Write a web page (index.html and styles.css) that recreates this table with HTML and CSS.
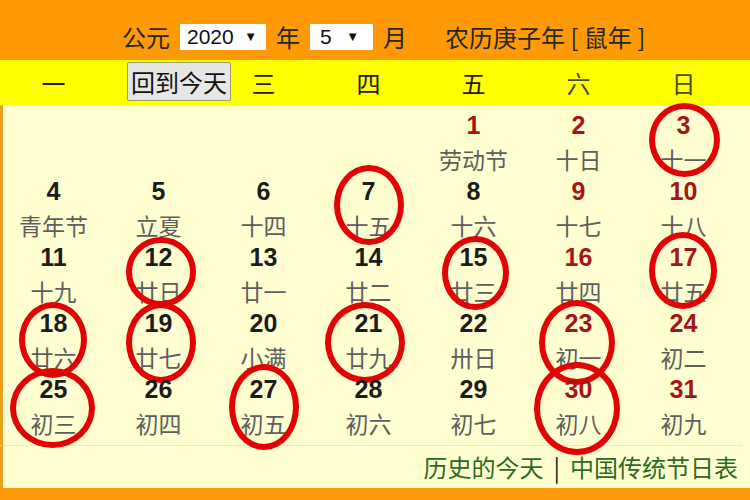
FILE: index.html
```html
<!DOCTYPE html>
<html lang="zh-CN">
<head>
<meta charset="utf-8">
<title>万年历 2020年5月</title>
<link rel="stylesheet" href="styles.css">
</head>
<body>
<div class="page">
  <div class="top">
    <span class="lbl">公元</span>
    <div class="sel sel-year"><span>2020</span><span class="arr">▼</span></div>
    <span class="lbl">年</span>
    <div class="sel sel-month"><span>5</span><span class="arr">▼</span></div>
    <span class="lbl">月</span>
    <span class="lbl lunar-year">农历庚子年 [ 鼠年 ]</span>
  </div>
  <div class="cal">
    <div class="week">
      <div class="wd">一</div>
      <div class="wd wd-btn"><button class="today">回到今天</button></div>
      <div class="wd">三</div>
      <div class="wd">四</div>
      <div class="wd">五</div>
      <div class="wd wd-end">六</div>
      <div class="wd wd-end">日</div>
    </div>
    <div class="days">
      <div class="cell"></div>
      <div class="cell"></div>
      <div class="cell"></div>
      <div class="cell"></div>
      <div class="cell red"><b class="num">1</b><span class="lun">劳动节</span></div>
      <div class="cell red"><b class="num">2</b><span class="lun">十日</span></div>
      <div class="cell red ring r-3"><b class="num">3</b><span class="lun">十一</span></div>

      <div class="cell"><b class="num">4</b><span class="lun">青年节</span></div>
      <div class="cell"><b class="num">5</b><span class="lun">立夏</span></div>
      <div class="cell"><b class="num">6</b><span class="lun">十四</span></div>
      <div class="cell ring r-7"><b class="num">7</b><span class="lun">十五</span></div>
      <div class="cell"><b class="num">8</b><span class="lun">十六</span></div>
      <div class="cell red"><b class="num">9</b><span class="lun">十七</span></div>
      <div class="cell red"><b class="num">10</b><span class="lun">十八</span></div>

      <div class="cell"><b class="num">11</b><span class="lun">十九</span></div>
      <div class="cell ring r-12"><b class="num">12</b><span class="lun">廿日</span></div>
      <div class="cell"><b class="num">13</b><span class="lun">廿一</span></div>
      <div class="cell"><b class="num">14</b><span class="lun">廿二</span></div>
      <div class="cell ring r-15"><b class="num">15</b><span class="lun">廿三</span></div>
      <div class="cell red"><b class="num">16</b><span class="lun">廿四</span></div>
      <div class="cell red ring r-17"><b class="num">17</b><span class="lun">廿五</span></div>

      <div class="cell ring r-18"><b class="num">18</b><span class="lun">廿六</span></div>
      <div class="cell ring r-19"><b class="num">19</b><span class="lun">廿七</span></div>
      <div class="cell"><b class="num">20</b><span class="lun">小满</span></div>
      <div class="cell ring r-21"><b class="num">21</b><span class="lun">廿九</span></div>
      <div class="cell"><b class="num">22</b><span class="lun">卅日</span></div>
      <div class="cell red ring r-23"><b class="num">23</b><span class="lun">初一</span></div>
      <div class="cell red"><b class="num">24</b><span class="lun">初二</span></div>

      <div class="cell ring r-25"><b class="num">25</b><span class="lun">初三</span></div>
      <div class="cell"><b class="num">26</b><span class="lun">初四</span></div>
      <div class="cell ring r-27"><b class="num">27</b><span class="lun">初五</span></div>
      <div class="cell"><b class="num">28</b><span class="lun">初六</span></div>
      <div class="cell"><b class="num">29</b><span class="lun">初七</span></div>
      <div class="cell red ring r-30"><b class="num">30</b><span class="lun">初八</span></div>
      <div class="cell red"><b class="num">31</b><span class="lun">初九</span></div>
    </div>
    <div class="foot">
      <a class="link">历史的今天</a><span class="sep">|</span><a class="link">中国传统节日表</a>
    </div>
  </div>
  <div class="bottom"></div>
</div>
</body>
</html>
```

FILE: styles.css
```css
html, body {
  margin: 0;
  padding: 0;
}

body {
  width: 750px;
  height: 500px;
  overflow: hidden;
  background: #ff9c0e;
  font-family: "Liberation Sans", "Noto Sans CJK SC", sans-serif;
}

.page {
  width: 750px;
  height: 500px;
  display: flex;
  flex-direction: column;
}

/* ---------- top bar ---------- */
.top {
  height: 60px;
  box-sizing: border-box;
  padding: 13px 0 0 122px;
  display: flex;
  align-items: center;
  gap: 10px;
  background: #ff9a06;
  color: #262626;
}

.lbl {
  font-family: "Noto Sans CJK SC", sans-serif;
  font-size: 24px;
  line-height: 28px;
}

.lunar-year {
  margin-left: 28px;
}

.sel {
  height: 26px;
  box-sizing: border-box;
  background: #fff;
  display: flex;
  align-items: center;
  justify-content: space-between;
  font-family: "Liberation Sans", sans-serif;
  font-size: 21px;
  color: #111;
}

.sel-year {
  width: 86px;
  padding: 0 9px 0 7px;
}

.sel-month {
  width: 63px;
  padding: 0 14px 0 10px;
}

.arr {
  font-size: 13px;
}

/* ---------- calendar ---------- */
.cal {
  flex: 1;
  background: #ffffd2;
  border-left: 3px solid #eba21f;
  display: flex;
  flex-direction: column;
}

.week {
  height: 45px;
  background: #ffff00;
  display: grid;
  grid-template-columns: repeat(7, 105px);
  grid-template-rows: 45px;
  align-items: center;
  margin-left: -3px;
  padding-left: 1px;
}

.wd {
  text-align: center;
  font-family: "Noto Sans CJK SC", sans-serif;
  font-size: 24px;
  line-height: 30px;
  color: #1a1a1a;
}

.wd-end {
  color: #4a4a30;
}

.wd-btn {
  text-align: left;
  padding-left: 21px;
  white-space: nowrap;
}

.today {
  height: 39px;
  padding: 0 3px;
  margin: 0;
  margin-top: -2px;
  white-space: nowrap;
  font-family: "Noto Sans CJK SC", sans-serif;
  font-size: 24px;
  line-height: 30px;
  color: #111;
  background: #e6e6e4;
  border: 1px solid #9b9b62;
  border-radius: 2px;
  vertical-align: middle;
}

.days {
  display: grid;
  grid-template-columns: repeat(7, 105px);
  grid-auto-rows: 66px;
  margin-left: -3px;
  padding-left: 1px;
  padding-bottom: 10px;
  border-bottom: 1px dotted #d2d2b8;
  margin-right: 8px;
}

.cell {
  position: relative;
  text-align: center;
}

.num {
  display: block;
  padding-top: 5px;
  font-family: "Liberation Sans", sans-serif;
  font-weight: bold;
  font-size: 25px;
  line-height: 30px;
  color: #1c1c1c;
}

.red .num {
  color: #a61515;
}

.lun {
  display: block;
  margin-top: 7px;
  font-family: "Noto Sans CJK SC", sans-serif;
  font-size: 23px;
  line-height: 24px;
  color: #5e5e5e;
}

/* hand-drawn red rings overlaid on days */
.ring::after {
  content: "";
  position: absolute;
  left: 50%;
  top: -4px;
  width: 70px;
  height: 78px;
  margin-left: -35px;
  box-sizing: border-box;
  border: 6px solid #e20404;
  border-radius: 50%;
}

.r-3::after { top: -2px; height: 74px; width: 71px; }
.r-7::after { top: -6px; height: 80px; }
.r-12::after { top: 0; height: 70px; margin-left: -33px; }
.r-15::after { top: -1px; width: 67px; height: 74px; margin-left: -32px; }
.r-17::after { top: -5px; width: 68px; height: 77px; }
.r-18::after { top: -1px; width: 68px; height: 76px; margin-left: -35px; }
.r-19::after { top: -1px; height: 81px; margin-left: -33px; }
.r-21::after { top: -1px; width: 80px; height: 81px; margin-left: -44px; }
.r-23::after { top: -3px; width: 76px; height: 85px; margin-left: -40px; }
.r-25::after { top: -1px; width: 85px; height: 80px; margin-left: -44px; }
.r-27::after { top: -5px; width: 70px; height: 86px; margin-left: -35px; }
.r-30::after { top: -7px; width: 86px; height: 93px; margin-left: -45px; }

/* ---------- footer links ---------- */
.foot {
  flex: 1;
  display: flex;
  justify-content: flex-end;
  align-items: center;
  gap: 10px;
  padding-right: 12px;
  font-family: "Noto Sans CJK SC", sans-serif;
  font-size: 24px;
  line-height: 28px;
}

.link {
  color: #2c6a1e;
  text-decoration: none;
}

.sep {
  color: #222;
}

.bottom {
  height: 12px;
  background: #ff9c0e;
}
```
